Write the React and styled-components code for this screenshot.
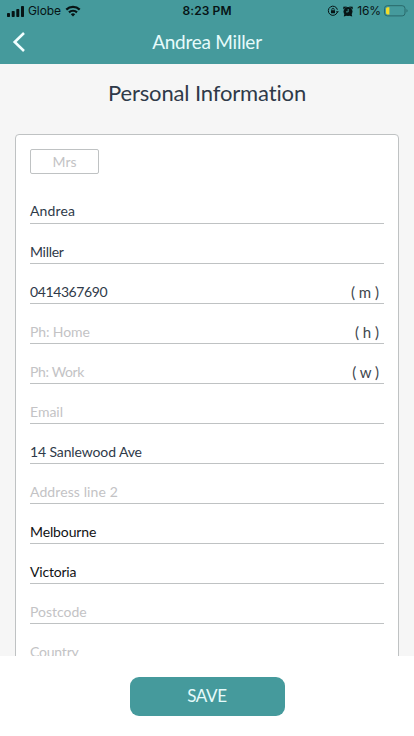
import React from "react";
import styled, { createGlobalStyle } from "styled-components";

const teal = "#459a9c";
const ink = "#2f3a49";
const line = "#bfc2c3";

const GlobalStyle = createGlobalStyle`
  * { box-sizing: border-box; }
  body { margin: 0; background: #fff; font-family: Lato, "Liberation Sans", sans-serif; }
`;

const Screen = styled.div`
  width: 414px;
  height: 736px;
  display: flex;
  flex-direction: column;
  overflow: hidden;
  background: #f6f6f6;
`;

const Header = styled.header`
  flex: 0 0 64px;
  background: ${teal};
`;

const StatusBar = styled.div`
  height: 20px;
  display: grid;
  grid-template-columns: 1fr auto 1fr;
  align-items: center;
  padding: 1px 5px 0 7px;
  color: #071415;
  font-family: Inter, sans-serif;
  font-size: 12px;
  line-height: 20px;
`;

const StatusGroup = styled.div`
  display: flex;
  align-items: center;
  justify-content: ${(p) => (p.$end ? "flex-end" : "flex-start")};
  svg { display: block; flex: none; }
`;

const Carrier = styled.span`
  margin: 0 4px 0 4px;
  letter-spacing: -0.1px;
`;

const Clock = styled.span`
  margin-right: 2px;
  font-weight: 600;
  letter-spacing: 0.1px;
`;

const Percent = styled.span`
  margin: 0 3px 0 4px;
  letter-spacing: -0.1px;
`;

const NavBar = styled.div`
  height: 44px;
  display: grid;
  grid-template-columns: 40px 1fr 40px;
  align-items: center;
`;

const BackButton = styled.button`
  border: 0;
  padding: 0 0 0 12px;
  background: none;
  height: 44px;
  svg { display: block; }
`;

const NavTitle = styled.h1`
  margin: 0;
  text-align: center;
  color: #e6fbfb;
  font-size: 19px;
  font-weight: 400;
  line-height: 44px;
  letter-spacing: -0.25px;
`;

const Content = styled.main`
  flex: 1;
  min-height: 0;
  overflow: hidden;
  padding: 0 15px;
`;

const SectionTitle = styled.h2`
  margin: 0;
  height: 70px;
  padding-top: 14px;
  text-align: center;
  color: ${ink};
  font-size: 22px;
  font-weight: 400;
  line-height: 30px;
  letter-spacing: -0.14px;
`;

const Card = styled.section`
  height: 640px;
  padding: 14px 14px 0;
  border: 1px solid ${line};
  border-radius: 4px;
  background: #fff;
`;

const TitleSelect = styled.div`
  width: 69px;
  height: 25px;
  margin-bottom: 9px;
  border: 1px solid ${line};
  border-radius: 2px;
  color: #c3c3c5;
  font-size: 14px;
  line-height: 23px;
  text-align: center;
`;

const Field = styled.div`
  height: ${(p) => (p.$first ? 41 : 40)}px;
  display: flex;
  justify-content: space-between;
  align-items: flex-end;
  border-bottom: 1px solid ${line};
  padding-bottom: ${(p) => (p.$first ? 2 : 1)}px;
  line-height: 20px;
`;

const tones = { filled: ink, empty: "#c3c3c5", picked: "#111214" };

const Value = styled.span`
  color: ${(p) => tones[p.$tone]};
  font-size: 14px;
  letter-spacing: ${(p) => p.$tracking}px;
  white-space: nowrap;
`;

const Suffix = styled.span`
  padding-right: 5px;
  color: #40464d;
  font-size: 15px;
`;

const Footer = styled.footer`
  flex: 0 0 80px;
  display: flex;
  justify-content: center;
  align-items: flex-start;
  padding-top: 21px;
  background: #fff;
`;

const SaveButton = styled.button`
  width: 155px;
  height: 39px;
  padding: 0 0 2px;
  border: 0;
  border-radius: 9px;
  background: ${teal};
  color: #e6fbfb;
  font-family: inherit;
  font-size: 17px;
  line-height: 36px;
  letter-spacing: -0.3px;
`;

const Signal = () => (
  <svg width="17" height="11" viewBox="0 0 17 11" fill="#071415">
    <rect x="0" y="7" width="3" height="4" rx=".7" />
    <rect x="4.7" y="5" width="3" height="6" rx=".7" />
    <rect x="9.3" y="3" width="3" height="8" rx=".7" />
    <rect x="14" y="0" width="3" height="11" rx=".7" />
  </svg>
);

const Wifi = () => (
  <svg width="16" height="12" viewBox="0 0 16 12" fill="none" stroke="#071415" strokeWidth="2.2">
    <path d="M1.3 4.6a9.6 9.6 0 0 1 13.4 0M4 7.4a5.7 5.7 0 0 1 8 0" />
    <path d="M8 11.5 5.8 9.3a3.2 3.2 0 0 1 4.4 0z" fill="#071415" stroke="none" />
  </svg>
);

const RotationLock = () => (
  <svg width="12" height="12" viewBox="0 0 12 12" fill="none" stroke="#071415">
    <path d="M10.3 7.2A4.6 4.6 0 1 1 10.4 4.7" strokeWidth="1" />
    <path d="M8.9 6.2h3L10.4 8z" fill="#071415" stroke="none" />
    <rect x="4" y="5.2" width="4" height="3.1" rx=".4" fill="#071415" stroke="none" />
    <path d="M4.8 5.5v-1a1.2 1.2 0 0 1 2.4 0v1" strokeWidth=".8" />
  </svg>
);

const AlarmGap = styled.span`
  width: 4px;
`;

const Alarm = () => (
  <svg width="10" height="11" viewBox="0 0 10 11" fill="#071415">
    <circle cx="5" cy="5.6" r="4.5" />
    <path d="M.3 3.6V.8L3.9.5zM9.7 3.6V.8L6.1.5zM1.2 8 .8 10.6l2.9-.8zM8.8 8l.4 2.6-2.9-.8z" />
    <path d="M5.2 3v2.9H3" fill="none" stroke={teal} strokeWidth=".9" />
  </svg>
);

const Battery = () => (
  <svg width="25" height="12" viewBox="0 0 25 12">
    <rect x=".5" y=".7" width="20.5" height="10.2" rx="2.8" fill="none" stroke="#29696b" />
    <path d="M3.6 2.2h1.8v7.2H3.6A1.6 1.6 0 0 1 2 7.8v-4a1.6 1.6 0 0 1 1.6-1.6z" fill="#f5dc28" />
    <path d="M22.5 4.1c1.4.4 1.4 3.1 0 3.5z" fill="#29696b" />
  </svg>
);

const fields = [
  { text: "Andrea", tone: "filled", tracking: 0.12 },
  { text: "Miller", tone: "filled", tracking: -0.3 },
  { text: "0414367690", tone: "filled", tracking: -0.4, suffix: "( m )" },
  { text: "Ph: Home", tone: "empty", tracking: -0.1, suffix: "( h )" },
  { text: "Ph: Work", tone: "empty", tracking: -0.35, suffix: "( w )" },
  { text: "Email", tone: "empty", tracking: 0 },
  { text: "14 Sanlewood Ave", tone: "filled", tracking: -0.12 },
  { text: "Address line 2", tone: "empty", tracking: 0.1 },
  { text: "Melbourne", tone: "picked", tracking: -0.12 },
  { text: "Victoria", tone: "picked", tracking: -0.2 },
  { text: "Postcode", tone: "empty", tracking: 0 },
  { text: "Country", tone: "empty", tracking: -0.2 },
];

export default function App() {
  return (
    <Screen>
      <GlobalStyle />
      <Header>
        <StatusBar>
          <StatusGroup>
            <Signal />
            <Carrier>Globe</Carrier>
            <Wifi />
          </StatusGroup>
          <Clock>8:23 PM</Clock>
          <StatusGroup $end>
            <RotationLock />
            <AlarmGap />
            <Alarm />
            <Percent>16%</Percent>
            <Battery />
          </StatusGroup>
        </StatusBar>
        <NavBar>
          <BackButton aria-label="Back">
            <svg width="14" height="20" viewBox="0 0 14 20" fill="none" stroke="#f2ffff" strokeWidth="2.6">
              <path d="M12 1 2.7 10 12 19" />
            </svg>
          </BackButton>
          <NavTitle>Andrea Miller</NavTitle>
        </NavBar>
      </Header>
      <Content>
        <SectionTitle>Personal Information</SectionTitle>
        <Card>
          <TitleSelect>Mrs</TitleSelect>
          {fields.map((f, i) => (
            <Field key={f.text} $first={i === 0}>
              <Value $tone={f.tone} $tracking={f.tracking}>{f.text}</Value>
              {f.suffix && <Suffix>{f.suffix}</Suffix>}
            </Field>
          ))}
        </Card>
      </Content>
      <Footer>
        <SaveButton>SAVE</SaveButton>
      </Footer>
    </Screen>
  );
}
